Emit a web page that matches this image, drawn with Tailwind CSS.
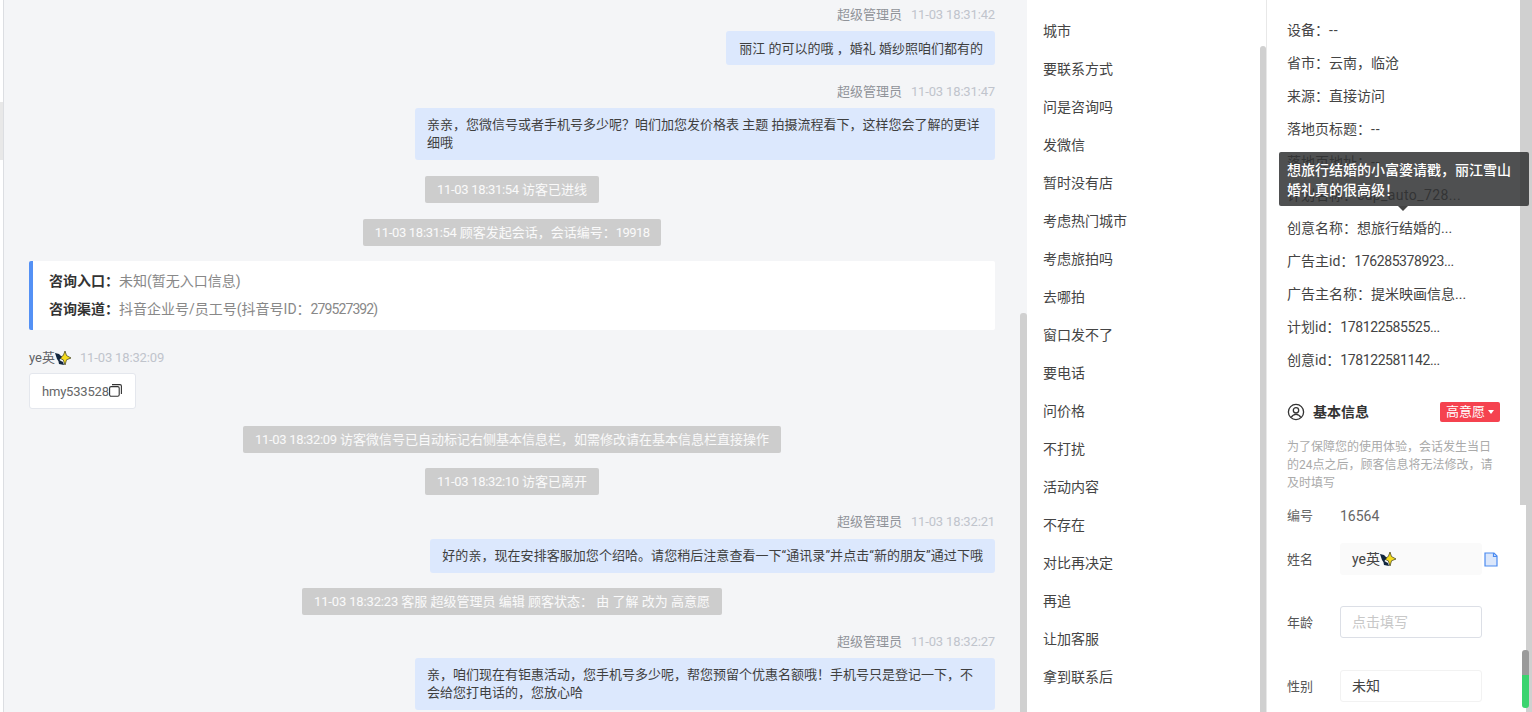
<!DOCTYPE html>
<html lang="zh">
<head>
<meta charset="utf-8">
<script src="https://cdn.jsdelivr.net/npm/@tailwindcss/browser@4"></script>
</head>
<body class="h-[712px] w-[1532px] overflow-hidden bg-white font-['Roboto','Noto_Sans_CJK_SC',sans-serif] text-[13px] text-[#3f3f3f]">
<div class="flex h-[712px]">
  <!-- sliver of the left pane -->
  <div class="flex w-[4px] flex-col border-r border-[#dcdee2] pt-[102px]">
    <div class="h-[58px] bg-[#e8e8e8]"></div>
  </div>
  <!-- chat -->
  <main class="relative w-[1023px] overflow-hidden bg-[#f4f5f7]">
    <div class="flex w-[991px] flex-col pl-[25px] pt-[6px]">
      <div class="flex h-[18px] items-center justify-end gap-[9px] text-[#909399]"><span>超级管理员</span><span class="tracking-[-0.15px] text-[#c0c4cc]">11-03 18:31:42</span></div>
      <div class="mt-[7px] flex justify-end"><div class="rounded-[3px] bg-[#dce8fd] pl-[13px] pr-[12px] pt-[9px] pb-[7px] leading-[18px]">丽江 的可以的哦 ，婚礼 婚纱照咱们都有的</div></div>
      <div class="mt-[18px] flex h-[18px] items-center justify-end gap-[9px] text-[#909399]"><span>超级管理员</span><span class="tracking-[-0.15px] text-[#c0c4cc]">11-03 18:31:47</span></div>
      <div class="mt-[7px] flex justify-end"><div class="w-[580px] rounded-[3px] bg-[#dce8fd] px-[12px] py-[8px] leading-[18px]">亲亲，您微信号或者手机号多少呢？咱们加您发价格表 主题 拍摄流程看下，这样您会了解的更详细哦</div></div>
      <div class="mt-[16px] flex justify-center"><div class="rounded-[2px] bg-[#cdcdcd] px-[12px] leading-[27px] text-white/90"><span class="tracking-[-0.3px]">11-03 18:31:54</span> 访客已进线</div></div>
      <div class="mt-[16px] flex justify-center"><div class="rounded-[2px] bg-[#cdcdcd] px-[12px] leading-[27px] text-white/90"><span class="tracking-[-0.3px]">11-03 18:31:54</span> 顾客发起会话，会话编号：<span class="tracking-[-0.6px]">19918</span></div></div>
      <div class="mt-[15px] h-[69px] rounded-[2px] border-l-[4px] border-[#5491f5] bg-white pl-[16px] pt-[6px] text-[14px] leading-[28px]">
        <div><b class="font-bold text-[#333]">咨询入口：</b><span class="text-[#888]">未知(暂无入口信息)</span></div>
        <div><b class="font-bold text-[#333]">咨询渠道：</b><span class="text-[#888]">抖音企业号/员工号(抖音号ID：<span class="tracking-[-0.9px]">279527392</span>)</span></div>
      </div>
      <div class="mt-[18px] flex h-[18px] items-center gap-[9px] pt-[1px] text-[#606266]"><span class="flex items-center">ye英<svg class="h-[16px] w-[16px]" viewBox="0 0 16 16"><path fill="#f6dc1e" stroke="#3a3a18" stroke-width=".7" d="M10 1l1.500 4.500L16 8l-4.500 1.800L10 15 8.300 9.800 4 8l4.300-2.500z"/><path fill="#12263f" d="M0 3l4 1 3 3-2 2-1 3-2-3zM3 9l3 2 2 1 1 3-5-1z"/></svg></span><span class="tracking-[-0.15px] text-[#c0c4cc]">11-03 18:32:09</span></div>
      <div class="mt-[7px] flex"><div class="flex h-[36px] w-[107px] items-center rounded-[3px] border border-[#e4e7ed] bg-white pl-[12px] pt-[1px] tracking-[-0.2px] text-[#666]">hmy533528<svg class="mb-[2px] h-[13px] w-[13px] shrink-0" viewBox="0 0 13 13" fill="none" stroke="#333" stroke-width="1.1"><rect x=".6" y="2.600" width="9.600" height="9.600" rx="1.500"/><path d="M3 .6h8a1.400 1.400 0 0 1 1.400 1.400v8"/></svg></div></div>
      <div class="mt-[17px] flex justify-center"><div class="rounded-[2px] bg-[#cdcdcd] px-[12px] leading-[27px] text-white/90"><span class="tracking-[-0.3px]">11-03 18:32:09</span> 访客微信号已自动标记右侧基本信息栏，如需修改请在基本信息栏直接操作</div></div>
      <div class="mt-[15px] flex justify-center"><div class="rounded-[2px] bg-[#cdcdcd] px-[12px] leading-[27px] text-white/90"><span class="tracking-[-0.3px]">11-03 18:32:10</span> 访客已离开</div></div>
      <div class="mt-[18px] flex h-[18px] items-center justify-end gap-[9px] text-[#909399]"><span>超级管理员</span><span class="tracking-[-0.15px] text-[#c0c4cc]">11-03 18:32:21</span></div>
      <div class="mt-[8px] flex justify-end"><div class="rounded-[3px] bg-[#dce8fd] px-[12px] py-[8px] leading-[18px] tracking-[0.05px]">好的亲，现在安排客服加您个绍哈。请您稍后注意查看一下“通讯录”并点击“新的朋友”通过下哦</div></div>
      <div class="mt-[15px] flex justify-center"><div class="rounded-[2px] bg-[#cdcdcd] px-[12px] leading-[27px] text-white/90"><span class="tracking-[-0.15px]">11-03 18:32:23</span> 客服 超级管理员 编辑 顾客状态： 由 了解 改为 高意愿</div></div>
      <div class="mt-[18px] flex h-[18px] items-center justify-end gap-[9px] text-[#909399]"><span>超级管理员</span><span class="tracking-[-0.15px] text-[#c0c4cc]">11-03 18:32:27</span></div>
      <div class="mt-[7px] flex justify-end"><div class="w-[580px] rounded-[3px] bg-[#dce8fd] px-[12px] py-[8px] leading-[18px]">亲，咱们现在有钜惠活动，您手机号多少呢，帮您预留个优惠名额哦！手机号只是登记一下，不会给您打电话的，您放心哈</div></div>
    </div>
    <div class="absolute left-[1016px] top-[313px] h-[399px] w-[7px] rounded-t-[3px] bg-[#d0d0d0]"></div>
  </main>
  <!-- quick tags -->
  <section class="relative w-[240px] border-r border-[#e8e8e8] bg-white pl-[16px] pt-[12px] text-[14px] text-[#444]">
    <ul class="flex flex-col leading-[38px]">
      <li>城市</li><li>要联系方式</li><li>问是咨询吗</li><li>发微信</li><li>暂时没有店</li><li>考虑热门城市</li><li>考虑旅拍吗</li><li>去哪拍</li><li>窗口发不了</li><li>要电话</li><li>问价格</li><li>不打扰</li><li>活动内容</li><li>不存在</li><li>对比再决定</li><li>再追</li><li>让加客服</li><li>拿到联系后</li>
    </ul>
    <div class="absolute left-[233px] top-[46px] h-[666px] w-[6px] rounded-t-[3px] bg-[#d0d0d0]"></div>
  </section>
  <!-- customer info -->
  <aside class="relative w-[265px] overflow-hidden bg-white">
    <div class="flex w-[233px] flex-col pl-[20px] pt-[14px] text-[14px] text-[#444]">
      <ul class="flex flex-col leading-[33px]">
        <li>设备：<span class="tracking-[1px]">--</span></li><li>省市：云南，临沧</li><li>来源：直接访问</li><li>落地页标题：<span class="tracking-[1px]">--</span></li><li>落地页地址：<span class="tracking-[1px]">--</span></li><li>计划名称：<span class="tracking-[0.4px]">cup_auto_728...</span></li><li>创意名称：想旅行结婚的...</li><li>广告主id：<span class="tracking-[-0.4px]">176285378923...</span></li><li>广告主名称：提米映画信息...</li><li>计划id：<span class="tracking-[-0.4px]">178122585525...</span></li><li>创意id：<span class="tracking-[-0.4px]">178122581142...</span></li>
      </ul>
      <div class="mt-[25px] flex h-[20px] items-center">
        <svg class="h-[18px] w-[18px]" viewBox="0 0 18 18" fill="none" stroke="#333" stroke-width="1.3"><circle cx="9" cy="9" r="7.600"/><circle cx="9" cy="7.300" r="2.700"/><path d="M4.200 14.600c1-2.200 2.800-3.200 4.800-3.200s3.800 1 4.800 3.200"/></svg>
        <span class="ml-[8px] font-bold text-[#333]">基本信息</span>
        <span class="ml-auto flex h-[20px] w-[60px] items-center justify-center gap-[3px] rounded-[2px] bg-[#f5424f] text-[13px] text-white">高意愿<span class="h-0 w-0 border-x-[3px] border-t-[4px] border-x-transparent border-t-white"></span></span>
      </div>
      <p class="mt-[16px] text-[12px] leading-[18px] text-[#aaa]">为了保障您的使用体验，会话发生当日的24点之后，顾客信息将无法修改，请及时填写</p>
      <div class="mt-[6px] flex h-[36px] items-center"><span class="w-[53px] text-[13px] text-[#666]">编号</span><span class="text-[#666]">16564</span></div>
      <div class="mt-[9px] flex h-[32px] items-center"><span class="w-[53px] pt-[2px] text-[13px] text-[#555]">姓名</span><div class="flex h-[32px] w-[142px] items-center rounded-[3px] bg-[#fafafa] pl-[12px]">ye英<svg class="h-[16px] w-[16px]" viewBox="0 0 16 16"><path fill="#f6dc1e" stroke="#3a3a18" stroke-width=".7" d="M10 1l1.500 4.500L16 8l-4.500 1.800L10 15 8.300 9.800 4 8l4.300-2.500z"/><path fill="#12263f" d="M0 3l4 1 3 3-2 2-1 3-2-3zM3 9l3 2 2 1 1 3-5-1z"/></svg></div>
        <svg class="ml-[2px] h-[15px] w-[14px]" viewBox="0 0 14 15" fill="#dbe7fb" stroke="#4c8bf0" stroke-width="1.200"><path d="M1 1h9l3 3v10H1z"/><path fill="none" d="M9.500 1v3.500H13"/></svg>
      </div>
      <div class="mt-[31px] flex h-[32px] items-center"><span class="w-[53px] pt-[2px] text-[13px] text-[#555]">年龄</span><div class="flex h-[32px] w-[142px] items-center rounded-[3px] border border-[#dcdfe6] pl-[11px] text-[#c8c8c8]">点击填写</div></div>
      <div class="mt-[32px] flex h-[32px] items-center"><span class="w-[53px] pt-[2px] text-[13px] text-[#555]">性别</span><div class="flex h-[32px] w-[142px] items-center rounded-[3px] border border-[#f2f2f2] pl-[11px]">未知</div></div>
    </div>
    <div class="absolute left-[253px] top-0 h-[505px] w-[6px] bg-[#d0d0d0]"></div>
    <div class="absolute left-[259px] top-0 h-[712px] w-[6px] bg-[#d0d0d0]"></div>
    <div class="absolute left-[255px] top-[650px] h-[58px] w-[7px] rounded-[3px] bg-linear-to-b from-[#9a9a9a] from-[43%] to-[#3bd46f] to-[43%]"></div>
    <!-- ad title tooltip -->
    <div class="absolute left-[12px] top-[152px] h-[54px] w-[250px] rounded-[2px] bg-[#303133]/85 px-[8px] pt-[8px] text-[14px] font-medium leading-[20px] text-white">想旅行结婚的小富婆请戳，丽江雪山婚礼真的很高级！
      <span class="absolute left-[119px] top-[54px] h-0 w-0 border-x-[5px] border-t-[5px] border-x-transparent border-t-[#444]"></span>
    </div>
  </aside>
</div>
</body>
</html>
